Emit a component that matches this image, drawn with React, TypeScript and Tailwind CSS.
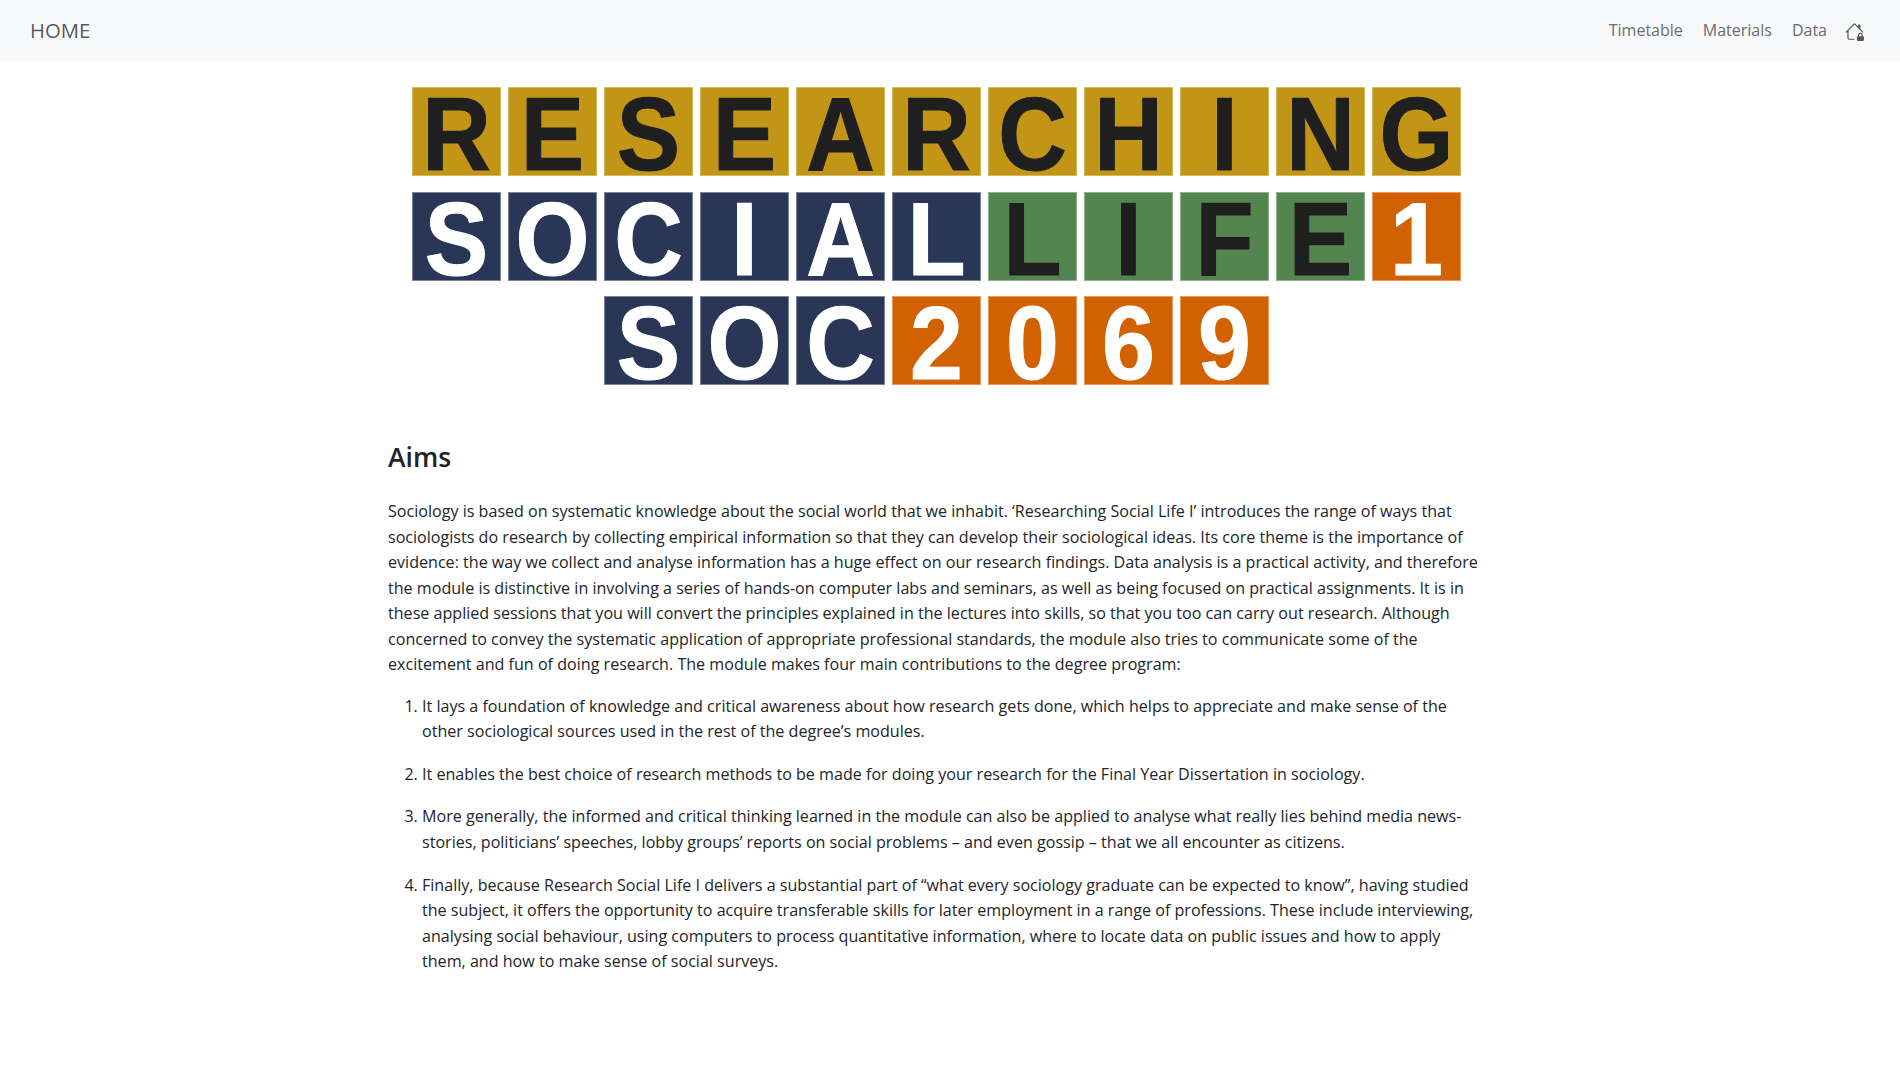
import React from 'react';
import { BsHouseLock } from 'react-icons/bs';

type Tone = 'gold' | 'navy' | 'green' | 'orange';

const toneClass: Record<Tone, string> = {
  gold: 'bg-[#c29516] text-[#1f1f1f] border-[#d9b75c]',
  navy: 'bg-[#2a3655] text-white border-[#7d859b]',
  green: 'bg-[#52864e] text-[#1f1f1f] border-[#8fb08c]',
  orange: 'bg-[#d26102] text-white border-[#e59a5c]',
};

const rows: [string, Tone][][] = [
  [...'RESEARCHING'].map((c) => [c, 'gold'] as [string, Tone]),
  [
    ...[...'SOCIAL'].map((c) => [c, 'navy'] as [string, Tone]),
    ...[...'LIFE'].map((c) => [c, 'green'] as [string, Tone]),
    ['1', 'orange'],
  ],
  [
    ...[...'SOC'].map((c) => [c, 'navy'] as [string, Tone]),
    ...[...'2069'].map((c) => [c, 'orange'] as [string, Tone]),
  ],
];

const Tile = ({ char, tone }: { char: string; tone: Tone }) => (
  <div
    className={`w-[89px] h-[89px] border flex items-center justify-center font-bold text-[95px] leading-none font-['Liberation_Sans',Arial,sans-serif] [-webkit-text-stroke:1px_currentColor] ${toneClass[tone]}`}
  >
    <span className="block scale-y-[1.09] translate-y-[3px]">{char}</span>
  </div>
);

const points = [
  'It lays a foundation of knowledge and critical awareness about how research gets done, which helps to appreciate and make sense of the other sociological sources used in the rest of the degree’s modules.',
  'It enables the best choice of research methods to be made for doing your research for the Final Year Dissertation in sociology.',
  'More generally, the informed and critical thinking learned in the module can also be applied to analyse what really lies behind media news-stories, politicians’ speeches, lobby groups’ reports on social problems – and even gossip – that we all encounter as citizens.',
  'Finally, because Research Social Life I delivers a substantial part of “what every sociology graduate can be expected to know”, having studied the subject, it offers the opportunity to acquire transferable skills for later employment in a range of professions. These include interviewing, analysing social behaviour, using computers to process quantitative information, where to locate data on public issues and how to apply them, and how to make sense of social surveys.',
];

export default function App() {
  return (
    <div className="min-h-[1079px] bg-white text-[#212529] font-['Open_Sans','Noto_Sans',sans-serif] text-[16.1px] leading-[25.5px]">
      <nav className="h-[62px] bg-[#f8f9fa] flex items-center justify-between pl-[30px] pr-[34px]">
        <a className="text-[20.3px] text-[#595a5c]">HOME</a>
        <div className="flex items-center gap-5 text-[16px] text-[#6b6c6e]">
          <a>Timetable</a>
          <a>Materials</a>
          <a>Data</a>
          <BsHouseLock className="w-[19px] h-[19px] text-[#555] -translate-x-[2px]" />
        </div>
      </nav>

      <main className="ml-[388px] w-[1098px]">
        <div className="pt-[25px] flex flex-col gap-[15.5px] w-[1097px]">
          {rows.map((row, i) => (
            <div key={i} className="flex justify-center gap-[7px]">
              {row.map(([char, tone], j) => (
                <Tile key={j} char={char} tone={tone} />
              ))}
            </div>
          ))}
        </div>

        <h2 className="mt-[55px] text-[26.5px] leading-[34px] font-semibold text-[#212529]">Aims</h2>

        <p className="mt-[25px]">
          Sociology is based on systematic knowledge about the social world that we inhabit. ‘Researching Social Life I’ introduces the range of ways that sociologists do research by collecting empirical information so that they can develop their sociological ideas. Its core theme is the importance of evidence: the way we collect and analyse information has a huge effect on our research findings. Data analysis is a practical activity, and therefore the module is distinctive in involving a series of hands-on computer labs and seminars, as well as being focused on practical assignments. It is in these applied sessions that you will convert the principles explained in the lectures into skills, so that you too can carry out research. Although concerned to convey the systematic application of appropriate professional standards, the module also tries to communicate some of the excitement and fun of doing research. The module makes four main contributions to the degree program:
        </p>

        <ol className="mt-4 pl-[34px] list-decimal flex flex-col gap-[17.2px]">
          {points.map((text, i) => (
            <li key={i}>{text}</li>
          ))}
        </ol>
      </main>
    </div>
  );
}
